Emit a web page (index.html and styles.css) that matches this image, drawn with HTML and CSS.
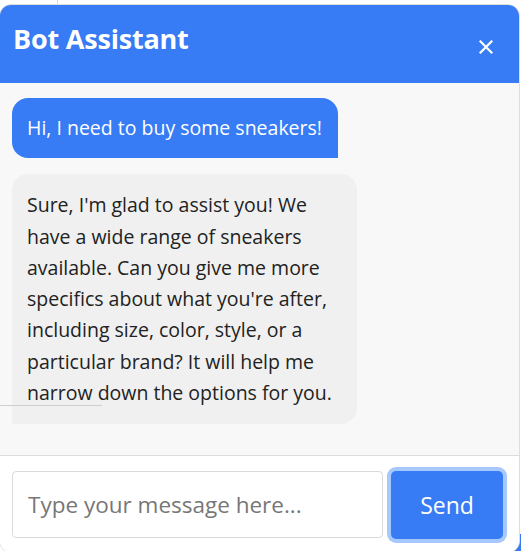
FILE: index.html
```html
<!DOCTYPE html>
<html lang="en">
<head>
<meta charset="utf-8">
<title>Bot Assistant</title>
<link rel="stylesheet" href="styles.css">
</head>
<body>
<div class="page-rule-v"></div>
<div class="launcher"></div>
<section class="chat">
  <header class="chat-header">
    <h1 class="chat-title">Bot Assistant</h1>
    <button class="chat-close" aria-label="Close">
      <svg width="14" height="14" viewBox="0 0 14 14"><path d="M1.5 1.5 L12.5 12.5 M12.5 1.5 L1.5 12.5" stroke="#fff" stroke-width="2.2" stroke-linecap="square"/></svg>
    </button>
  </header>
  <div class="chat-messages">
    <div class="msg msg-user">Hi, I need to buy some sneakers!</div>
    <div class="msg msg-bot">Sure, I'm glad to assist you! We have a wide range of sneakers available. Can you give me more specifics about what you're after, including size, color, style, or a particular brand? It will help me narrow down the options for you.</div>
  </div>
  <form class="chat-footer" onsubmit="return false">
    <input class="chat-input" type="text" placeholder="Type your message here...">
    <button class="chat-send" type="submit">Send</button>
  </form>
</section>
<div class="page-rule-h"></div>
</body>
</html>
```
FILE: styles.css
```css
* { box-sizing: border-box; }
html, body { margin: 0; padding: 0; background: #fff; }
body {
  font-family: "Open Sans", "Noto Sans", sans-serif;
  width: 524px;
  height: 551px;
  overflow: hidden;
  position: relative;
  padding-top: 4px;
}
.page-rule-v {
  position: absolute;
  left: 57px; top: 0;
  width: 1px; height: 5px;
  background: #dadada;
}
.page-rule-h {
  position: absolute;
  left: 0; top: 405px;
  width: 102px; height: 1px;
  background: #cfcfcf;
}
.launcher {
  position: absolute;
  left: 508px; top: 534px;
  width: 13px; height: 20px;
  border-radius: 0 0 4px 0;
  background: #377bf5;
}
.chat {
  position: relative;
  margin-left: -1px;
  width: 521px;
  height: 549px;
  border: 1px solid #dedede;
  border-radius: 12px;
  overflow: hidden;
  background: #f8f8f8;
  display: flex;
  flex-direction: column;
}
.chat-header {
  height: 78px;
  flex: none;
  background: #377bf5;
  display: flex;
  justify-content: space-between;
  align-items: flex-start;
  padding: 16px 26px 0 13px;
}
.chat-title {
  margin: 0;
  font-size: 27px;
  line-height: 36px;
  font-weight: 700;
  color: #fff;
  letter-spacing: -0.2px;
}
.chat-close {
  margin-top: 19px;
  padding: 0;
  border: 0;
  background: none;
  width: 14px; height: 14px;
  display: block;
}
.chat-close svg { display: block; }
.chat-messages {
  height: 372px;
  flex: none;
  padding: 15px 12px;
  display: flex;
  flex-direction: column;
  align-items: flex-start;
  gap: 16px;
}
.msg {
  font-size: 19.5px;
  line-height: 31.3px;
  max-width: 345px;
}
.msg-user {
  background: #377bf5;
  color: #fff;
  padding: 14px 16px 15px 15px;
  border-radius: 16px 16px 0 16px;
}
.msg-bot {
  background: #f0f0f0;
  color: #222;
  padding: 15px 16px 16px 15px;
  border-radius: 16px 16px 16px 0;
}
.chat-footer {
  flex: 1;
  margin: 0;
  background: #fff;
  border-top: 1px solid #dcdcdc;
  padding: 15px 16px 12px 12px;
  display: flex;
  align-items: flex-start;
  gap: 8px;
}
.chat-input {
  flex: 1;
  height: 67px;
  border: 1px solid #dadada;
  border-radius: 4px;
  padding: 0 15px;
  font-family: inherit;
  font-size: 22.5px;
  color: #222;
  outline: none;
}
.chat-input::placeholder { color: #777; }
.chat-send {
  width: 112px;
  height: 68px;
  border: 0;
  border-radius: 5px;
  background: #377bf5;
  color: #fff;
  font-family: inherit;
  font-size: 23px;
  box-shadow: 0 0 0 4px #a7c8fc;
}
```
